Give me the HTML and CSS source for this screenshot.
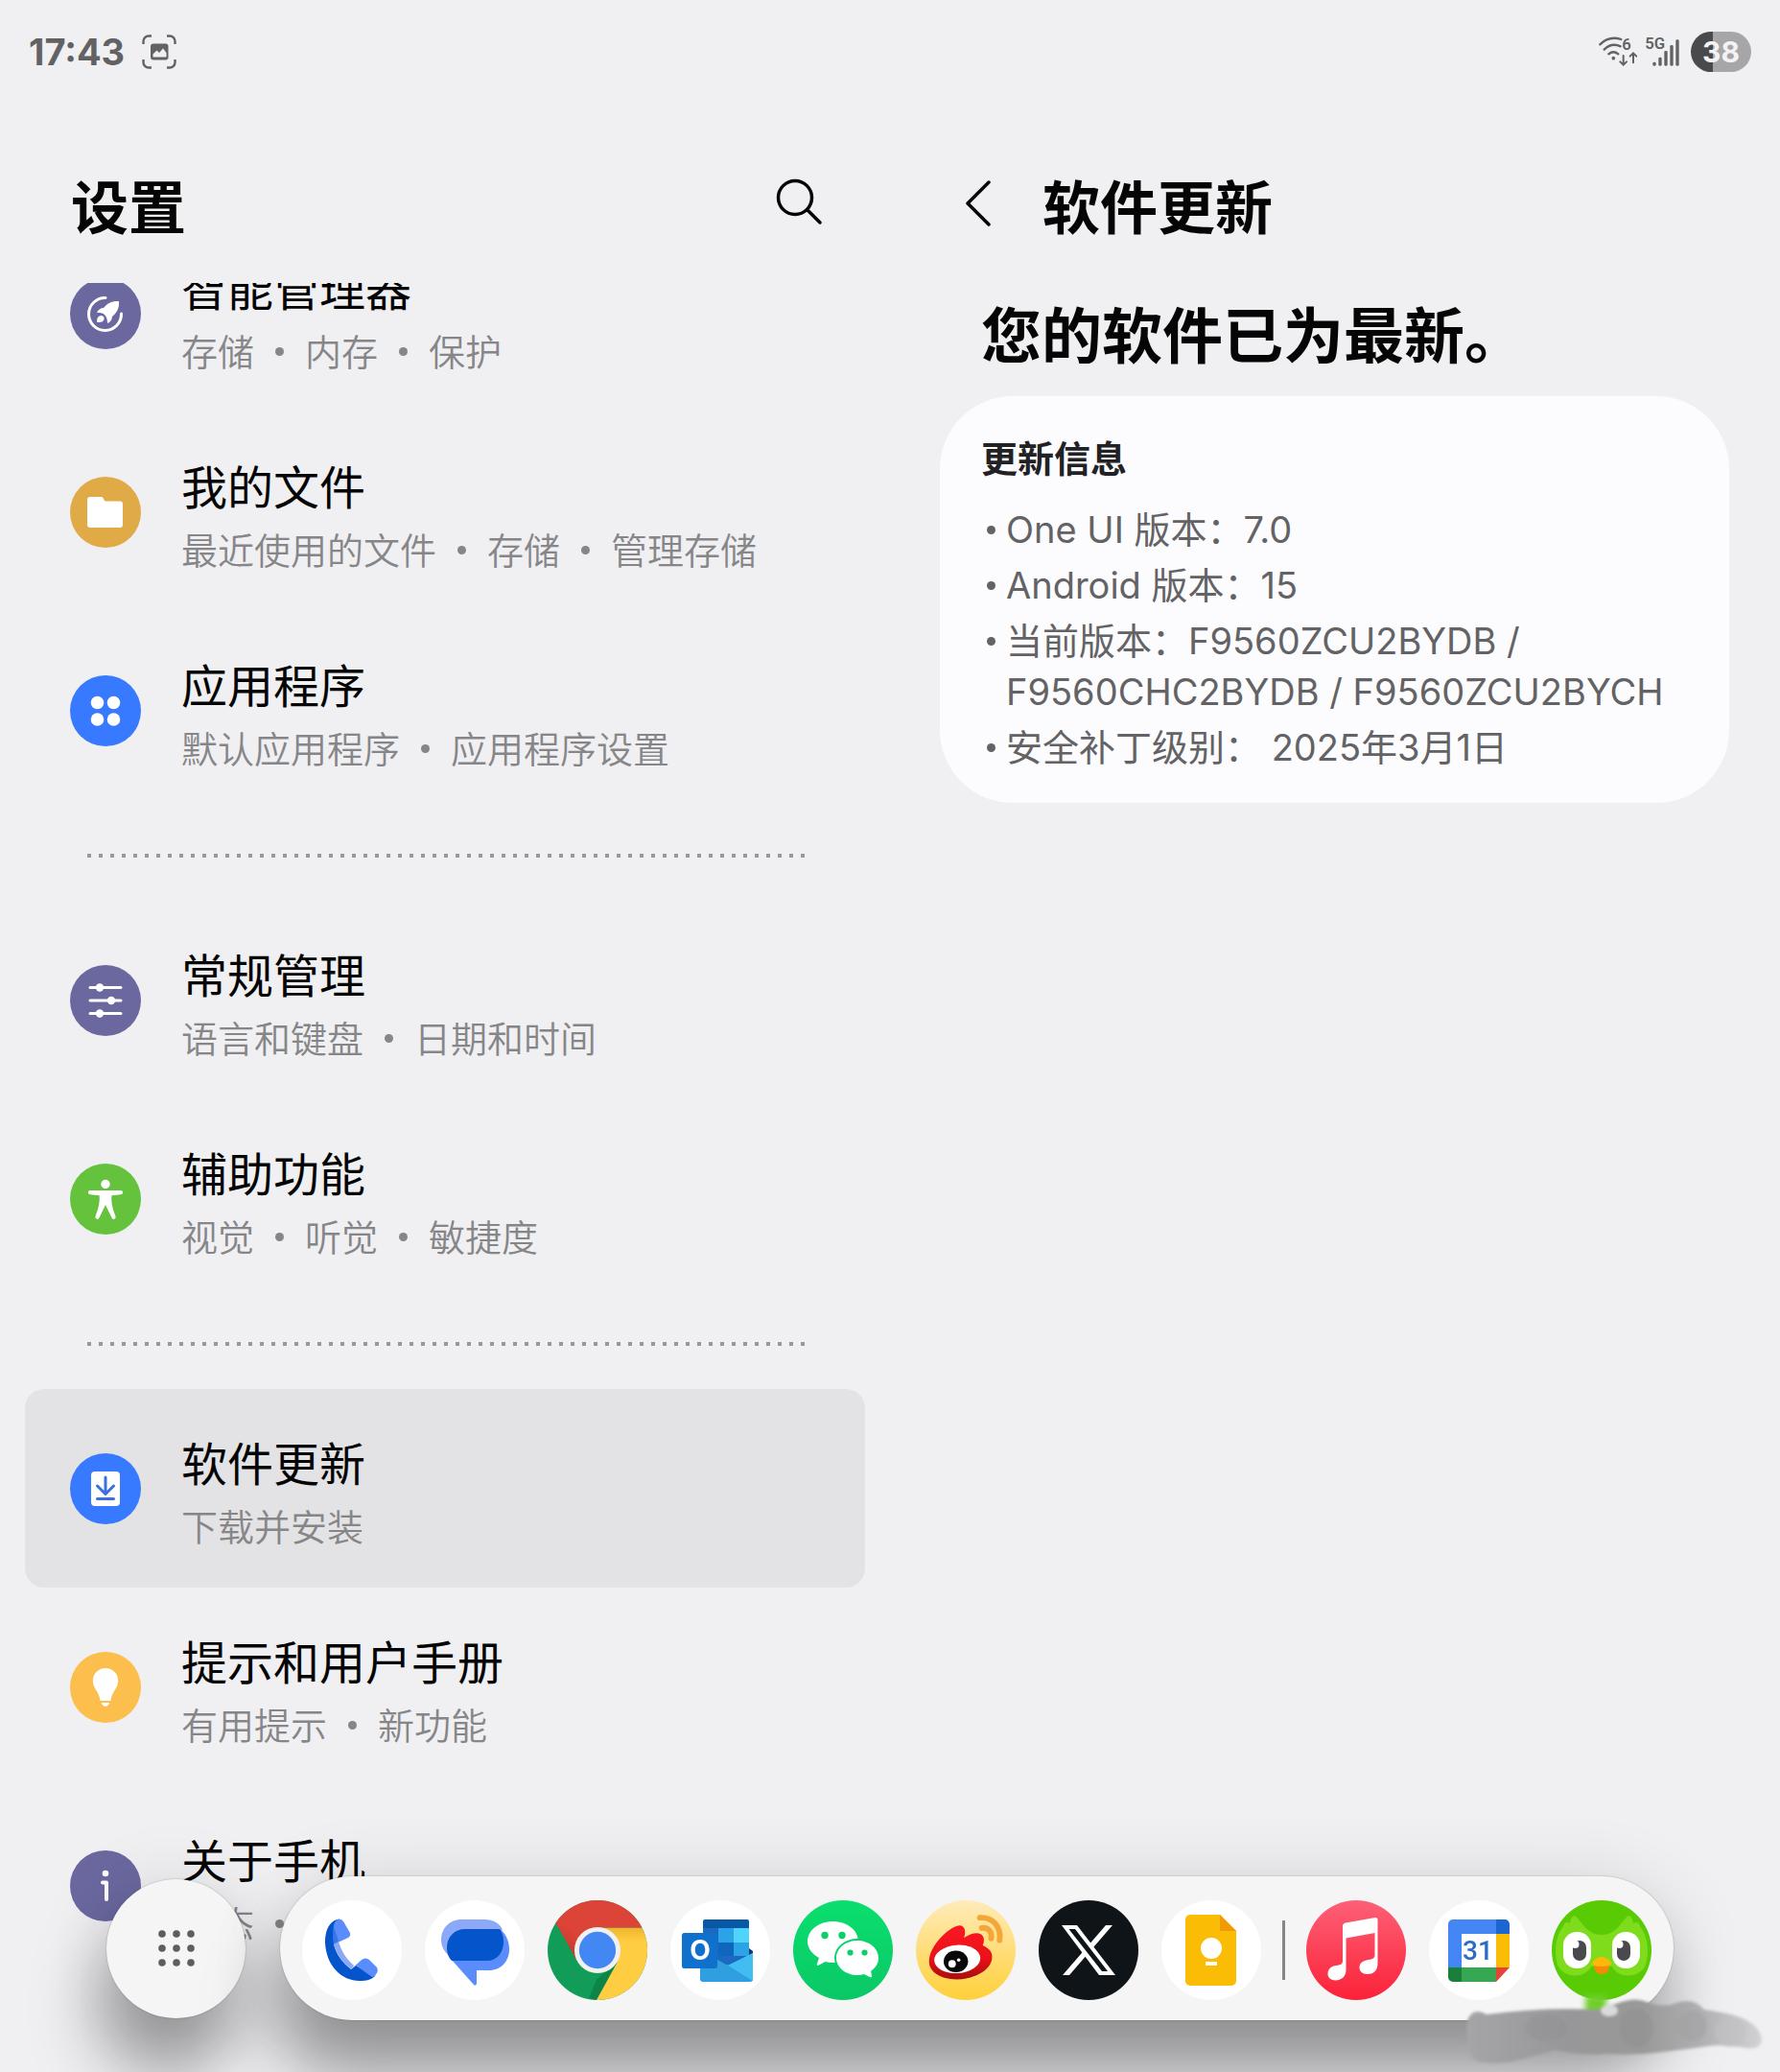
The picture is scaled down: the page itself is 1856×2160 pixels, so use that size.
FILE: index.html
```html
<!DOCTYPE html>
<html lang="zh-CN">
<head>
    <meta charset="UTF-8">
    <meta name="viewport" content="width=device-width, initial-scale=1.0">
    <title>设置</title>
    <link rel="stylesheet" href="styles.css">
</head>
<body>
    <div class="status-bar">
        <div class="status-left">
            <span class="time">17:43</span>
            <svg class="shot-icon" viewBox="0 0 36 36" aria-hidden="true">
                <path d="M1.500 10V7a5.500 5.500 0 0 1 5.500-5.500h3M26 1.500h3a5.500 5.500 0 0 1 5.500 5.500v3M34.500 26v3a5.500 5.500 0 0 1-5.500 5.500h-3M10 34.500H7A5.500 5.500 0 0 1 1.500 29v-3" fill="none" stroke="#626264" stroke-width="2.400"/>
                <rect x="9" y="9.500" width="18.500" height="17" rx="3" fill="#626264"/>
                <path d="M11.500 23.500v-3l4-4 2.500 2.500 4-4.500 3.500 4.500v4.500z" fill="#f0f0f3"/>
            </svg>
        </div>
        <div class="status-right">
            <svg class="wifi-icon" viewBox="0 0 120 96" aria-label="Wi-Fi 6">
                <g fill="none" stroke="#626264" stroke-width="7" stroke-linecap="round">
                    <path d="M4 25Q32-3 70 9"/>
                    <path d="M17 41Q40 18 68 31"/>
                    <path d="M31 55Q46 42 61 55"/>
                    <path d="M77 60v28M67 79l10 10 10-10M108 82V53M98 62l10-10 10 10" stroke-width="6"/>
                </g>
                <circle cx="46" cy="68" r="5.500" fill="#626264"/>
                <text x="73" y="42" class="net-text">6</text>
            </svg>
            <svg class="signal-icon" viewBox="0 0 108 96" aria-label="5G">
                <text x="1" y="38" class="net-text">5G</text>
                <g fill="#626264">
                    <rect x="25" y="80" width="10" height="12" rx="4"/>
                    <rect x="43" y="65" width="10" height="27" rx="4"/>
                    <rect x="61" y="45" width="10" height="47" rx="4"/>
                    <rect x="79" y="27" width="10" height="65" rx="4"/>
                    <rect x="97" y="10" width="10" height="82" rx="4"/>
                </g>
            </svg>
            <span class="battery">38</span>
        </div>
    </div>

    <main class="panes">
        <section class="pane pane-list">
            <header class="pane-header">
                <h1>设置</h1>
                <button type="button" class="icon-button" aria-label="搜索">
                    <svg viewBox="0 0 60 60"><g fill="none" stroke="#050505" stroke-width="3.500" stroke-linecap="round"><circle cx="26" cy="25" r="17.500"/><path d="M39 38l13 13"/></g></svg>
                </button>
            </header>
            <div class="scroller">
                <nav class="settings-list">
                    <a href="#" class="row">
                        <svg class="row-icon purple" viewBox="0 0 74 74">
                            <path d="M37 20.500A17 17 0 1 0 53.500 37" fill="none" stroke="#fff" stroke-width="3" stroke-linecap="round"/>
                            <path d="M51 24c-7-.5-12 2-16 7-3 0-6 2-7 5 3 0 6 0 8 2s3 5 3 9c3-1 5-4 5-7 5-4 7.500-9 7-16z" fill="#fff"/>
                            <path d="M28 46c0-4 1-7 5-7 3 1 3 3 2 5s-4 2-7 2z" fill="#fff"/>
                        </svg>
                        <span class="row-text">
                            <span class="row-title">智能管理器</span>
                            <span class="row-sub">存储<i></i>内存<i></i>保护</span>
                        </span>
                    </a>
                    <a href="#" class="row">
                        <svg class="row-icon gold" viewBox="0 0 74 74">
                            <path d="M21 21h12c2 0 2 4 4 4.500h15a3 3 0 0 1 3 3V50a3 3 0 0 1-3 3H21a3 3 0 0 1-3-3V24a3 3 0 0 1 3-3z" fill="#fff"/>
                        </svg>
                        <span class="row-text">
                            <span class="row-title">我的文件</span>
                            <span class="row-sub">最近使用的文件<i></i>存储<i></i>管理存储</span>
                        </span>
                    </a>
                    <a href="#" class="row">
                        <svg class="row-icon blue" viewBox="0 0 74 74">
                            <g fill="#fff"><circle cx="28.500" cy="28.500" r="6.800"/><circle cx="45.500" cy="28.500" r="6.800"/><circle cx="28.500" cy="46" r="6.800"/><circle cx="45.500" cy="46" r="6.800"/></g>
                        </svg>
                        <span class="row-text">
                            <span class="row-title">应用程序</span>
                            <span class="row-sub">默认应用程序<i></i>应用程序设置</span>
                        </span>
                    </a>
                    <hr class="dots">
                    <a href="#" class="row">
                        <svg class="row-icon purple" viewBox="0 0 74 74">
                            <path d="M21 23.500h32M21 37h32M21 50.500h32" stroke="#fff" stroke-width="3" stroke-linecap="round"/>
                            <g fill="#fff"><circle cx="31" cy="23.500" r="4.200"/><circle cx="43" cy="37" r="4.200"/><circle cx="31" cy="50.500" r="4.200"/></g>
                        </svg>
                        <span class="row-text">
                            <span class="row-title">常规管理</span>
                            <span class="row-sub">语言和键盘<i></i>日期和时间</span>
                        </span>
                    </a>
                    <a href="#" class="row">
                        <svg class="row-icon green" viewBox="0 0 74 74">
                            <circle cx="37" cy="21.500" r="4.700" fill="#fff"/>
                            <path d="M21 28h32a2 2 0 0 1 0 4.200l-9.500 1c-1 6 1 14 4 21.800a2.100 2.100 0 0 1-4 1.400L37 43l-6.500 13.400a2.100 2.100 0 0 1-4-1.400c3-7.800 5-15.800 4-21.800l-9.500-1a2 2 0 0 1 0-4.200z" fill="#fff"/>
                        </svg>
                        <span class="row-text">
                            <span class="row-title">辅助功能</span>
                            <span class="row-sub">视觉<i></i>听觉<i></i>敏捷度</span>
                        </span>
                    </a>
                    <hr class="dots">
                    <a href="#" class="row selected" aria-current="page">
                        <svg class="row-icon blue" viewBox="0 0 74 74">
                            <rect x="22" y="19" width="30" height="36" rx="4" fill="#fff"/>
                            <path d="M37 25v16M28.500 34l8.500 8.500 8.500-8.500M28.500 47.500h17" fill="none" stroke="#3b6fe0" stroke-width="3" stroke-linecap="round" stroke-linejoin="round"/>
                        </svg>
                        <span class="row-text">
                            <span class="row-title">软件更新</span>
                            <span class="row-sub">下载并安装</span>
                        </span>
                    </a>
                    <a href="#" class="row">
                        <svg class="row-icon amber" viewBox="0 0 74 74">
                            <path d="M37 17a13.200 13.200 0 0 1 13.200 13.200c0 8-6.700 11-7.700 20.800h-11c-1-9.800-7.700-12.800-7.700-20.800A13.200 13.200 0 0 1 37 17zM33 53h8c0 5-8 5-8 0z" fill="#fff"/>
                        </svg>
                        <span class="row-text">
                            <span class="row-title">提示和用户手册</span>
                            <span class="row-sub">有用提示<i></i>新功能</span>
                        </span>
                    </a>
                    <a href="#" class="row">
                        <svg class="row-icon purple" viewBox="0 0 74 74">
                            <circle cx="37" cy="24" r="3.300" fill="#fff"/>
                            <path d="M34 33.500h4V51" fill="none" stroke="#fff" stroke-width="4" stroke-linecap="round" stroke-linejoin="round"/>
                        </svg>
                        <span class="row-text">
                            <span class="row-title">关于手机</span>
                            <span class="row-sub">状态<i></i></span>
                        </span>
                    </a>
                </nav>
            </div>
        </section>

        <section class="pane pane-detail">
            <header class="pane-header">
                <button type="button" class="icon-button" aria-label="返回">
                    <svg viewBox="0 0 60 60"><path d="M43 9L21 31l22 22" fill="none" stroke="#050505" stroke-width="3.500" stroke-linecap="round" stroke-linejoin="round"/></svg>
                </button>
                <h1>软件更新</h1>
            </header>
            <h2 class="headline">您的软件已为最新。</h2>
            <div class="card">
                <h3>更新信息</h3>
                <ul>
                    <li>One UI 版本：7.0</li>
                    <li>Android 版本：15</li>
                    <li>当前版本：F9560ZCU2BYDB / F9560CHC2BYDB / F9560ZCU2BYCH</li>
                    <li>安全补丁级别： 2025年3月1日</li>
                </ul>
            </div>
        </section>
    </main>

    <footer class="taskbar">
        <button type="button" class="launcher" aria-label="所有应用">
            <svg viewBox="0 0 40 40"><g fill="#5e5e60">
                <circle cx="5" cy="5" r="3.800"/><circle cx="20" cy="5" r="3.800"/><circle cx="35" cy="5" r="3.800"/>
                <circle cx="5" cy="20" r="3.800"/><circle cx="20" cy="20" r="3.800"/><circle cx="35" cy="20" r="3.800"/>
                <circle cx="5" cy="35" r="3.800"/><circle cx="20" cy="35" r="3.800"/><circle cx="35" cy="35" r="3.800"/>
            </g></svg>
        </button>
        <div class="dock">
            <div class="dock-group">
                <a href="#" class="app" aria-label="电话">
                    <svg viewBox="0 0 104 104">
                        <circle cx="52" cy="52" r="52" fill="#fff"/>
                        <path d="M39 19.500C28 21 24 32 24 44c1 24 17 40 36 40 7 0 12-1 16-5L56 68l-5 4C42 65 36 57 33 46l5-8z" fill="#0454cc"/>
                        <path d="M37 20q4-1 6 2l7 12q1 3-2 5l-15 7c-2-9 0-18 0-20q1-4 4-6z" fill="#5a8dfb"/>
                        <path d="M33 28c2 6 4 10 5 16l-5 2c-2-7-1-13 0-18z" fill="#0454cc" opacity=".4"/>
                        <path d="M33 46l5-3c3 10 8 18 16 25l-3 4c-9-7-15-16-18-26z" fill="#8ca9f9"/>
                        <path d="M51 72l11-10q4-3 8 0l8 8q2 4-1 7-1 3-4 3L56 68z" fill="#5a8dfb"/>
                    </svg>
                </a>
                <a href="#" class="app" aria-label="信息">
                    <svg viewBox="0 0 104 104">
                        <circle cx="52" cy="52" r="52" fill="#fff"/>
                        <path d="M38 20h24c10 0 16 4 19 11L25 58C20 53 17 48 17 41c0-12 9-21 21-21z" fill="#8ca9f9"/>
                        <path d="M44 30h34c6 4 10 12 10 21 0 13-9 22-21 22H54v14q-1 3-3 1L27 61c-3-4-4-7-4-12z" fill="#5a8dfb"/>
                        <path d="M42 30h36c3 4 4 8 4 13 0 12-7 20-17 20H28c-3-3-5-8-5-14 0-11 8-19 19-19z" fill="#0454cc"/>
                    </svg>
                </a>
                <a href="#" class="app" aria-label="Chrome">
                    <svg viewBox="0 0 106 106">
                        <defs>
                            <linearGradient id="redShade" x1="0" y1="1" x2="1" y2="0"><stop offset="0" stop-color="#b5362b"/><stop offset=".35" stop-color="#dc4437"/></linearGradient>
                            <linearGradient id="yellowShade" x1="0" y1="0" x2="0" y2="1"><stop offset="0" stop-color="#eeb52f"/><stop offset=".2" stop-color="#ffcd41"/></linearGradient>
                        </defs>
                        <circle cx="53" cy="53" r="53" fill="#119d58"/>
                        <path d="M74 66L52 84l-8 20 8 2z" fill="#0d8549"/>
                        <path d="M53 29h47.300A53 53 0 0 1 52 106l22-40z" fill="url(#yellowShade)"/>
                        <path d="M8.600 24A53 53 0 0 1 100.300 29H53L31 64z" fill="url(#redShade)"/>
                        <circle cx="53" cy="53" r="24.500" fill="#f1f1f1"/>
                        <circle cx="53" cy="53" r="19.500" fill="#4387f5"/>
                    </svg>
                </a>
                <a href="#" class="app" aria-label="Outlook">
                    <svg viewBox="0 0 104 104">
                        <circle cx="52" cy="52" r="52" fill="#fff"/>
                        <path d="M82 50l4 3v3l-4 2z" fill="#123b6d"/>
                        <path d="M34 29h48v29l-22 10-26-8z" fill="#1b69c0"/>
                        <path d="M36 20h44a2 2 0 0 1 2 2v7H34v-7a2 2 0 0 1 2-2z" fill="#0858a8"/>
                        <path d="M50 29h16v15H50zM66 44h16v14H66z" fill="#2ba3e6"/>
                        <path d="M66 29h16v15H66z" fill="#50d4fb"/>
                        <path d="M50 44h16v14H50z" fill="#0f66bd"/>
                        <path d="M31 60l29 8 26-13v27a3 3 0 0 1-3 3H34a3 3 0 0 1-3-3z" fill="#2ba1e6"/>
                        <path d="M60 68l26-13v27q0 2-2 2z" fill="#42bdf2"/>
                        <path d="M49 62l11 6 26 16H34a3 3 0 0 1-3-3V71h18z" fill="#2f9fe0"/>
                        <rect x="12" y="34" width="37" height="37" rx="2.500" fill="#1071cd"/>
                        <text x="31" y="62" class="outlook-text">O</text>
                    </svg>
                </a>
                <a href="#" class="app" aria-label="微信">
                    <svg viewBox="0 0 104 104">
                        <defs><linearGradient id="wechatBg" x1="0" y1="0" x2="0" y2="1"><stop offset="0" stop-color="#0adf6e"/><stop offset="1" stop-color="#0bc766"/></linearGradient></defs>
                        <circle cx="52" cy="52" r="52" fill="url(#wechatBg)"/>
                        <path d="M41.500 22C56 22 68 31 68 43S56 65 41.500 65q-4 0-8-1L26 68q-2 0-1-2l2-6C20 56 15 50 15 43c0-12 12-21 26.500-21z" fill="#fff"/>
                        <path d="M67 42c12 0 22 8 22 18 0 6-3 10-8 14l1 5q0 2-2 1l-6-3q-3 1-7 1c-12 0-22-8-22-18s10-18 22-18z" fill="#fff" stroke="#0ad26a" stroke-width="4" paint-order="stroke"/>
                        <g fill="#0bcf69"><circle cx="33" cy="36.500" r="3.700"/><circle cx="51" cy="36.500" r="3.700"/><circle cx="59.500" cy="54.500" r="3.100"/><circle cx="74.500" cy="54.500" r="3.100"/></g>
                    </svg>
                </a>
                <a href="#" class="app" aria-label="微博">
                    <svg viewBox="0 0 106 106">
                        <defs>
                            <linearGradient id="weiboBg" x1="0" y1="0" x2="0" y2="1"><stop offset="0" stop-color="#ffebba"/><stop offset="1" stop-color="#ffd03a"/></linearGradient>
                            <linearGradient id="weiboRed" x1="0" y1="0" x2="0" y2="1"><stop offset="0" stop-color="#fb1822"/><stop offset=".6" stop-color="#ea1218"/><stop offset="1" stop-color="#a80d0c"/></linearGradient>
                        </defs>
                        <circle cx="53" cy="53" r="53" fill="url(#weiboBg)"/>
                        <path d="M14 65c0-9 6-19 14-27 7-7 16-12 20-11 5 2 5 7 3 13 6-4 13-7 18-4 4 3 4 7 2 12 6 3 10 6 10 12 0 14-18 24-38 24-17 0-29-8-29-19z" fill="url(#weiboRed)"/>
                        <ellipse cx="44" cy="62.500" rx="24.500" ry="15" fill="#fff" transform="rotate(-4 44 62.500)"/>
                        <ellipse cx="42.500" cy="65" rx="13" ry="11.500" fill="#080808"/>
                        <circle cx="38.500" cy="67.500" r="4" fill="#fff"/><circle cx="45.500" cy="63.500" r="1.800" fill="#fff"/>
                        <path d="M68 18.500c13-1 23 9 21 24M70 29.500c7-1 11 4 10 11" fill="none" stroke="#f4a636" stroke-width="6" stroke-linecap="round"/>
                    </svg>
                </a>
                <a href="#" class="app" aria-label="X">
                    <svg viewBox="0 0 104 104">
                        <circle cx="52" cy="52" r="52" fill="#0f1418"/>
                        <path d="M70 26h7L32 78h-7z" fill="#fff"/>
                        <path d="M24 26h16l40 52H63z" fill="#fff"/>
                        <path d="M31.500 30H38l34 44h-6z" fill="#0f1418"/>
                    </svg>
                </a>
                <a href="#" class="app" aria-label="Keep 记事">
                    <svg viewBox="0 0 104 104">
                        <circle cx="52" cy="52" r="52" fill="#fff"/>
                        <path d="M30 15h31l17 17v52a5 5 0 0 1-5 5H30a5 5 0 0 1-5-5V20a5 5 0 0 1 5-5z" fill="#fabc04"/>
                        <path d="M61 15l17 17H61z" fill="#f29a05"/>
                        <circle cx="52" cy="50" r="11" fill="#fff"/>
                        <path d="M47 57h10v3H47zM46 64h12v4H46z" fill="#fff"/>
                    </svg>
                </a>
            </div>
            <span class="dock-divider"></span>
            <div class="dock-group">
                <a href="#" class="app" aria-label="音乐">
                    <svg viewBox="0 0 104 104">
                        <defs><linearGradient id="musicBg" x1="0" y1="0" x2="0" y2="1"><stop offset="0" stop-color="#fd6077"/><stop offset="1" stop-color="#fb2238"/></linearGradient></defs>
                        <circle cx="52" cy="52" r="52" fill="url(#musicBg)"/>
                        <path d="M41 23.500l31-5.500q2.500 0 2.500 2v46c0 8-5 11-11 11-5 0-8-3-8-7 0-5 4-7 9-8 5-.5 7-2 7-5V34l-30 5.500v33c0 7-5 11-11 11-5 0-8-3-8-7 0-5 4-8 9-8.500 4-.5 6.500-1.500 6.500-5V27q0-3 3-3.500z" fill="#fff"/>
                    </svg>
                </a>
                <a href="#" class="app" aria-label="日历">
                    <svg viewBox="0 0 104 104">
                        <circle cx="52" cy="52" r="52" fill="#fff"/>
                        <path d="M25 20h45v15H34v35H20V25a5 5 0 0 1 5-5z" fill="#4486f4"/>
                        <path d="M70 20h9a5 5 0 0 1 5 5v10H70z" fill="#1c66d3"/>
                        <path d="M70 35h14v35H70z" fill="#fbbc05"/>
                        <path d="M70 70h14L70 85z" fill="#e54335"/>
                        <path d="M34 70h36v15H34z" fill="#36a853"/>
                        <path d="M20 70h14v15h-9a5 5 0 0 1-5-5z" fill="#1a8039"/>
                        <text x="51" y="62" class="calendar-text">31</text>
                    </svg>
                </a>
                <a href="#" class="app" aria-label="多邻国">
                    <svg viewBox="0 0 104 104">
                        <circle cx="52" cy="52" r="52" fill="#58cb05"/>
                        <path d="M24 16c8 6 12 20 28 20s20-14 28-20c4 1 4 4 5 8 4-2 6-1 7 3 8 10 10 26 6 40-6 15-29 15-35 2H41c-6 13-29 13-35-2-4-14-2-30 6-40 1-4 3-5 7-3 1-4 1-7 5-8z" fill="#7edc1d"/>
                        <rect x="12" y="33" width="29" height="38" rx="14" fill="#fff"/><rect x="63" y="33" width="29" height="38" rx="14" fill="#fff"/>
                        <rect x="22" y="42" width="14" height="21" rx="7" fill="#4a4a4e"/><rect x="68" y="42" width="14" height="21" rx="7" fill="#4a4a4e"/>
                        <circle cx="24.500" cy="46" r="4" fill="#fff"/><circle cx="70.500" cy="46" r="4" fill="#fff"/>
                        <path d="M44 68h16c0 5-3 9-8 9s-8-4-8-9z" fill="#f68a08"/>
                        <path d="M42 66c1-4 6-7 10-7s9 3 10 7c-1 4-19 4-20 0z" fill="#fdb909"/>
                    </svg>
                </a>
            </div>
        </div>
        <svg class="smudge" viewBox="0 0 320 80" aria-hidden="true">
            <defs>
                <filter id="soft" x="-10%" y="-20%" width="120%" height="140%"><feGaussianBlur stdDeviation="1.600"/></filter>
                <filter id="softer" x="-50%" y="-50%" width="200%" height="200%"><feGaussianBlur stdDeviation="3"/></filter>
                <linearGradient id="smear" x1="0" y1="0" x2="1" y2="0"><stop offset="0" stop-color="#a5a5a7"/><stop offset=".35" stop-color="#979799"/><stop offset=".6" stop-color="#999"/><stop offset=".8" stop-color="#b0b0b2"/><stop offset="1" stop-color="#d2d2d4"/></linearGradient>
            </defs>
            <path d="M127 4h22v20h-22z" fill="#6fce2a" filter="url(#softer)"/>
            <g filter="url(#soft)">
                <path d="M4 30q6-14 20-6 60-8 115-5 8-3 20-6 20-8 32-2 16 6 28 2 20-8 32 6 30 4 42 10 16 8 18 20 0 12-16 10-26-4-40-2-30 4-46 6-30 4-60 2-28 2-54-4-20 6-44 12-30 4-40-2-10-14-7-41z" fill="url(#smear)"/>
                <ellipse cx="152" cy="20" rx="9" ry="6" fill="#dadadc"/>
                <ellipse cx="180" cy="38" rx="18" ry="20" fill="#8f8f91" opacity=".5"/>
                <ellipse cx="86" cy="38" rx="22" ry="14" fill="#8f8f91" opacity=".4"/>
                <ellipse cx="238" cy="36" rx="16" ry="16" fill="#a2a2a4" opacity=".6"/>
                <ellipse cx="278" cy="42" rx="16" ry="16" fill="#c2c2c4" opacity=".6"/>
            </g>
        </svg>
    </footer>
</body>
</html>
```

FILE: styles.css
```css
* {
    box-sizing: border-box;
}
body {
    margin: 0;
    min-height: 100vh;
    background-color: #f0f0f3;
    color: #050505;
    font-family: Inter, "Noto Sans CJK SC", sans-serif;
}
h1, h2, h3, ul {
    margin: 0;
    padding: 0;
}
a {
    color: inherit;
    text-decoration: none;
}
button {
    padding: 0;
    border: none;
    background: none;
    cursor: pointer;
}
svg {
    display: block;
}

/* status bar */
.status-bar {
    display: flex;
    justify-content: space-between;
    align-items: center;
    height: 108px;
    padding: 0 30px;
    color: #626264;
}
.status-left, .status-right {
    display: flex;
    align-items: center;
}
.status-left {
    gap: 18px;
}
.status-right {
    gap: 8px;
}
.time {
    font-size: 38px;
    font-weight: 700;
}
.shot-icon {
    width: 36px;
    height: 36px;
}
.wifi-icon {
    width: 40px;
    height: 32px;
}
.signal-icon {
    width: 36px;
    height: 32px;
    overflow: visible;
}
.net-text {
    font-family: Roboto, sans-serif;
    font-size: 50px;
    font-weight: 600;
    fill: #626264;
}
.battery {
    width: 63px;
    margin-left: 4px;
    border-radius: 21px;
    background: linear-gradient(to right, #4a4a4c 37%, #a6a6a8 37%);
    color: #f3f3f5;
    font-size: 30px;
    font-weight: 700;
    line-height: 42px;
    text-align: center;
}

/* two panes */
.panes {
    display: grid;
    grid-template-columns: 1fr 1fr;
}
.pane-list {
    padding: 0 26px;
}
.pane-detail {
    padding: 0 53px 0 52px;
}
.pane-header {
    display: flex;
    align-items: flex-start;
    height: 187px;
    padding-top: 73px;
}
.pane-list .pane-header {
    justify-content: space-between;
    padding-left: 48px;
    padding-right: 39px;
}
.pane-detail .pane-header {
    gap: 39px;
    padding-left: 8px;
}
h1 {
    font-size: 60px;
    font-weight: 700;
    line-height: 72px;
}
.icon-button, .icon-button svg {
    width: 60px;
    height: 60px;
}

/* the list is scrolled a little, its first row is cut off */
.scroller {
    overflow: hidden;
}
.settings-list {
    margin-top: -72px;
}
.row {
    display: flex;
    align-items: center;
    gap: 42px;
    height: 207px;
    padding: 0 47px;
    border-radius: 20px;
}
.row.selected {
    background-color: #e3e3e5;
}
.row-icon {
    flex: none;
    width: 74px;
    height: 74px;
    border-radius: 50%;
}
.purple { background-color: #6a689f; }
.gold { background-color: #e0ab47; }
.blue { background-color: #387aff; }
.green { background-color: #65c23c; }
.amber { background-color: #fcbe4c; }
.row-text {
    display: flex;
    flex-direction: column;
    padding-top: 8px;
}
.row-title {
    font-size: 48px;
    line-height: 72px;
}
.row-sub {
    display: flex;
    align-items: center;
    color: #868688;
    font-size: 38px;
    font-weight: 350;
    line-height: 58px;
}
.row-sub i {
    width: 9px;
    height: 9px;
    margin: 0 22px;
    border-radius: 50%;
    background-color: #868688;
}
.dots {
    height: 4px;
    margin: 46px 60px 45px 65px;
    border: none;
    background-image: linear-gradient(to right, #98989a 4px, transparent 4px);
    background-size: 12px 4px;
    background-repeat: repeat-x;
}

/* detail */
.headline {
    margin: 15px 0 23px;
    padding-left: 43px;
    font-size: 63px;
    line-height: 80px;
}
.card {
    padding: 39px 43px 31px;
    border-radius: 76px;
    background-color: #fcfcfe;
}
.card h3 {
    margin-bottom: 22px;
    color: #222224;
    font-size: 38px;
    line-height: 52px;
}
.card ul {
    display: flex;
    flex-direction: column;
    gap: 5px;
    color: #636365;
    font-size: 38px;
    line-height: 53px;
    list-style: none;
}
.card li {
    display: flex;
    gap: 11px;
}
.card li::before {
    content: "";
    flex: none;
    width: 9px;
    height: 9px;
    margin: 22px 0 0 6px;
    border-radius: 50%;
    background-color: #636365;
}

/* taskbar */
.taskbar {
    position: fixed;
    left: 0;
    right: 0;
    bottom: 0;
    display: flex;
    justify-content: center;
    align-items: center;
    gap: 36px;
    padding-bottom: 54px;
}
.launcher, .dock {
    background-color: #f5f5f6;
    box-shadow: -10px 60px 70px rgba(0, 0, 0, 0.34), 0 10px 80px rgba(0, 0, 0, 0.14), 0 0 2px rgba(0, 0, 0, 0.3);
}
.launcher {
    display: flex;
    justify-content: center;
    align-items: center;
    width: 145px;
    height: 145px;
    border-radius: 50%;
}
.launcher svg {
    width: 40px;
    height: 40px;
}
.dock {
    display: flex;
    align-items: center;
    gap: 22px;
    height: 150px;
    padding: 4px 23px 0;
    border-radius: 75px;
}
.dock-group {
    display: flex;
    gap: 24px;
}
.app, .app svg {
    width: 104px;
    height: 104px;
}
.dock-divider {
    width: 3px;
    height: 62px;
    background-color: #868688;
}
.outlook-text {
    font-size: 28px;
    font-weight: 700;
    fill: #fff;
    text-anchor: middle;
}
.calendar-text {
    font-family: Roboto, sans-serif;
    font-size: 28px;
    font-weight: 500;
    fill: #2b6cc4;
    text-anchor: middle;
}
.smudge {
    position: absolute;
    right: 10px;
    bottom: 4px;
    width: 320px;
    height: 80px;
}
```
